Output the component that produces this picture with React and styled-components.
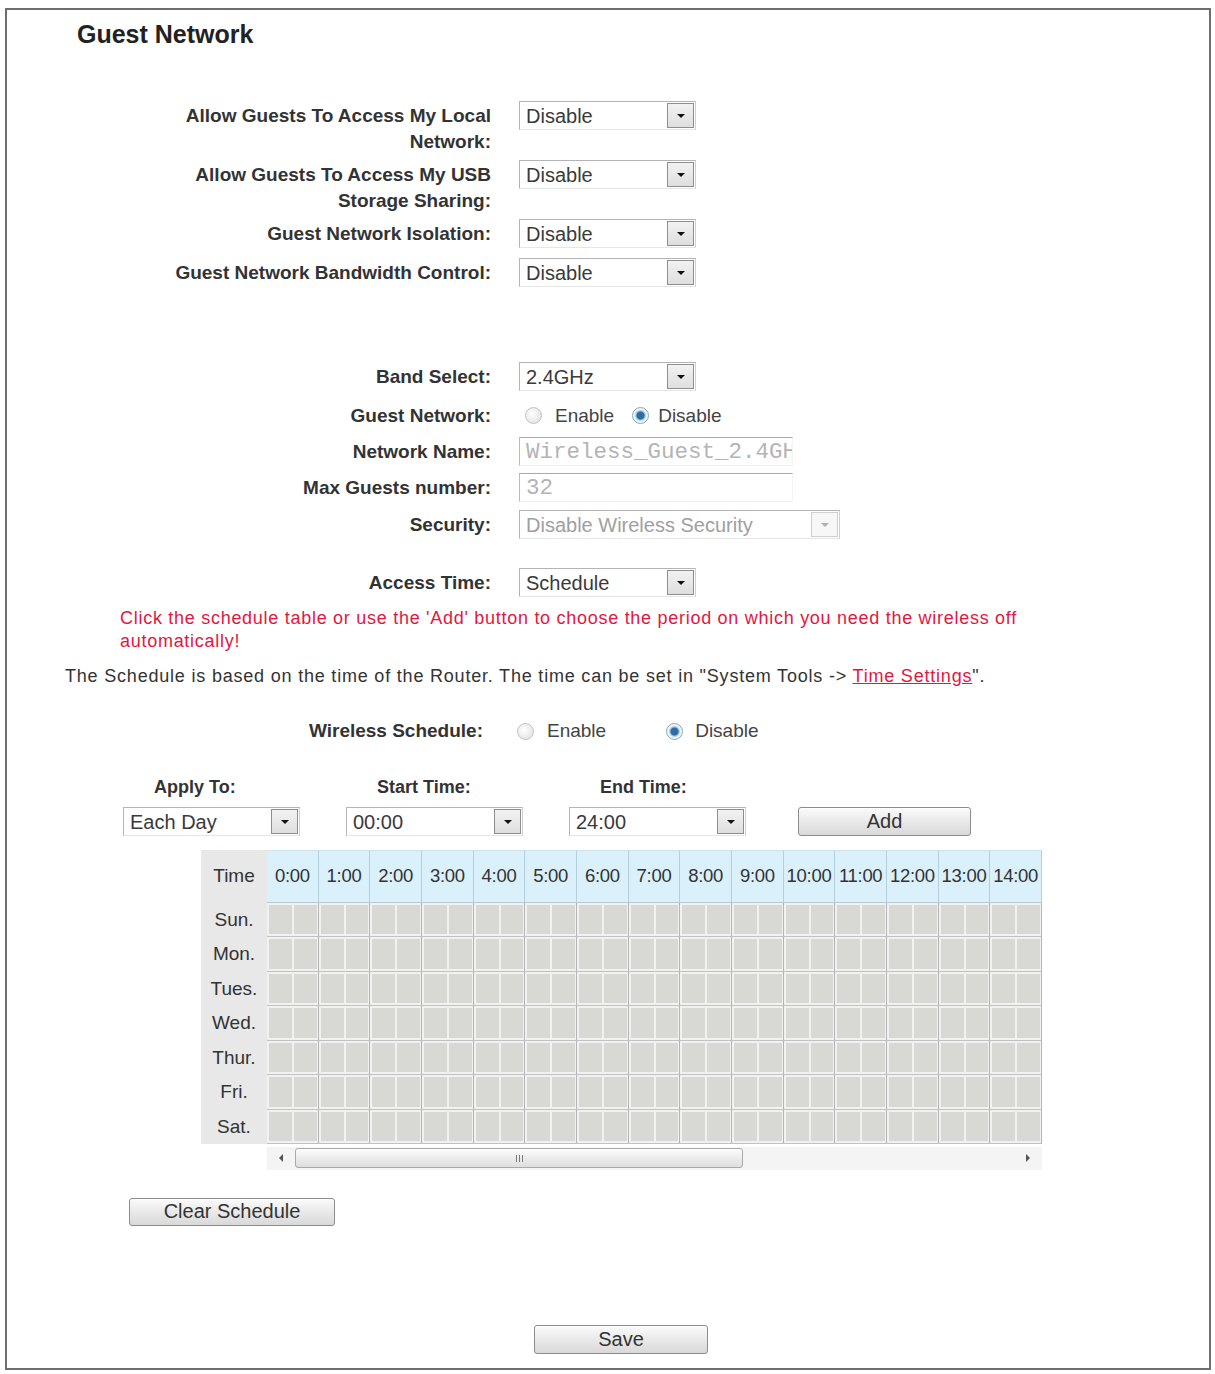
import React from "react";
import styled, { createGlobalStyle } from "styled-components";

const GlobalStyle = createGlobalStyle`
  html, body {
    margin: 0;
    padding: 0;
    background: #fff;
  }
  body {
    font-family: "Liberation Sans", Arial, sans-serif;
    color: #333;
  }
`;

const Frame = styled.div`
  box-sizing: border-box;
  width: 1206px;
  height: 1362px;
  margin: 8px 0 0 5px;
  border: 2px solid #6e6e6e;
  background: #fff;
`;

const Title = styled.h1`
  margin: 9px 0 0 70px;
  font-size: 25px;
  line-height: 30px;
  font-weight: bold;
  color: #222;
`;

const Form = styled.div`
  margin-top: 52px;
  display: flex;
  flex-direction: column;
`;

const Field = styled.div`
  display: grid;
  grid-template-columns: ${(p) => p.$labelWidth || 484}px 1fr;
  column-gap: ${(p) => p.$gap || 28}px;
  height: ${(p) => p.$h}px;
  margin-top: ${(p) => p.$mt || 0}px;
`;

const Label = styled.div`
  text-align: right;
  font-size: 19px;
  font-weight: bold;
  line-height: 26px;
  padding-top: 1.5px;
  color: #333;
`;

const Select = styled.div`
  box-sizing: border-box;
  display: flex;
  width: ${(p) => p.$w || 177}px;
  height: 29px;
  border: 1px solid #b4b4b4;
  border-bottom-color: #e6e6e6;
  border-right-color: #d0d0d0;
  background: #fff;
  font-size: 20px;
  color: ${(p) => (p.$disabled ? "#a0a0a0" : "#3a3a3a")};
`;

const SelectValue = styled.span`
  flex: 1;
  padding-left: 6px;
  line-height: 28px;
  white-space: nowrap;
  overflow: hidden;
`;

const ArrowBox = styled.span`
  box-sizing: border-box;
  width: 27px;
  margin: 1px 1px 1px 0;
  border: 1px solid ${(p) => (p.$disabled ? "#d0d0d0" : "#8e8e8e")};
  background: ${(p) =>
    p.$disabled ? "#f7f7f7" : "linear-gradient(#f2f2f2, #dedede)"};
  display: flex;
  align-items: center;
  justify-content: center;

  &::after {
    content: "";
    border-left: 4px solid transparent;
    border-right: 4px solid transparent;
    border-top: 4px solid ${(p) => (p.$disabled ? "#b0b0b0" : "#111")};
  }
`;

const TextBox = styled.input`
  box-sizing: border-box;
  width: ${(p) => p.$w || 274}px;
  height: 29px;
  margin: 0;
  padding: 0 0 0 6px;
  border: 1px solid #a8a8a8;
  border-left-color: #bcbcbc;
  border-right-color: #f4f4f4;
  border-bottom-color: #f0f0f0;
  background: #fff;
  font-family: "Liberation Mono", "Courier New", monospace;
  font-size: 22.5px;
  color: #b4b4b4;
  outline: none;
`;

const RadioGroup = styled.div`
  display: flex;
  align-items: center;
  height: 29px;
  padding-left: ${(p) => p.$pl || 0}px;
  gap: ${(p) => p.$gap}px;
`;

const Option = styled.label`
  display: flex;
  align-items: center;
  gap: ${(p) => p.$gap || 12}px;
  font-size: 19px;
  color: #444;
`;

const Radio = styled.span`
  box-sizing: border-box;
  width: 17px;
  height: 17px;
  border-radius: 50%;
  border: 1px solid ${(p) => (p.$checked ? "#8aa6bd" : "#c2c2c2")};
  background: ${(p) =>
    p.$checked
      ? "radial-gradient(circle, #2d6da3 0 3.5px, #9cc0dc 4.5px, #eef4f8 6px)"
      : "radial-gradient(circle at 40% 40%, #ffffff, #dcdcdc)"};
`;

const Note = styled.p`
  margin: 0;
  width: 925px;
  padding-left: 113px;
  font-size: 18px;
  letter-spacing: 0.72px;
  line-height: 23px;
  color: #e3163f;
`;

const Info = styled.p`
  margin: 12px 0 0 58px;
  font-size: 18px;
  letter-spacing: 0.8px;
  line-height: 23px;
  color: #333;
`;

const TimeLink = styled.a`
  color: #e3163f;
  text-decoration: underline;
`;

const Controls = styled.div`
  display: flex;
  align-items: flex-end;
  gap: 46px;
  margin-top: 29.5px;
  padding-left: 116px;
`;

const ControlGroup = styled.div`
  display: flex;
  flex-direction: column;
  gap: 8px;
`;

const SmallLabel = styled.div`
  padding-left: 31px;
  font-size: 18px;
  font-weight: bold;
  line-height: 24px;
  color: #333;
`;

const Button = styled.button`
  box-sizing: border-box;
  width: ${(p) => p.$w}px;
  height: ${(p) => p.$h || 29}px;
  margin: 0 0 0 ${(p) => p.$ml || 0}px;
  padding: 0;
  border: 1px solid #8c8c8c;
  border-radius: 3px;
  background: linear-gradient(#fbfbfb, #e9e9e9 50%, #d9d9d9);
  font-family: "Liberation Sans", Arial, sans-serif;
  font-size: 20px;
  color: #333;
  box-shadow: inset 0 1px 0 #fff;
`;

const Schedule = styled.div`
  display: flex;
  margin: 13.5px 0 0 194px;
`;

const TimeCol = styled.div`
  width: 66px;
  height: 294.5px;
  background: #e8e8e8;
  display: grid;
  grid-template-rows: 53px repeat(7, 34.5px);
  text-align: center;
  font-size: 19px;
  color: #333;
`;

const TimeCell = styled.div`
  display: flex;
  align-items: center;
  justify-content: center;
`;

const ScrollArea = styled.div`
  width: 775px;
  display: flex;
  flex-direction: column;
`;

const Hours = styled.div`
  display: grid;
  grid-template-columns: repeat(${(p) => p.$cols}, 1fr);
  grid-template-rows: 53px repeat(7, 34.5px);
  background: #c9c9c9;
`;

const HourHead = styled.div`
  box-sizing: border-box;
  display: flex;
  align-items: center;
  justify-content: center;
  background: #daf0fb;
  border-top: 1px solid #cde2ec;
  border-right: 1px solid #b3cfdd;
  border-bottom: 1px solid #b9c9d1;
  font-size: 18.5px;
  color: #333;
  white-space: nowrap;
  letter-spacing: -0.3px;
`;

const Slot = styled.div`
  box-sizing: border-box;
  display: flex;
  gap: 2px;
  padding: 2px 1px 2px 2px;
  background: #f1f1ef;
  border-right: 1px solid #b5b5b5;
  border-bottom: 1px solid #c2c2c2;
`;

const Half = styled.span`
  flex: 1;
  background: #d8d8d5;
`;

const ScrollBar = styled.div`
  display: flex;
  align-items: center;
  height: 23px;
  margin-top: 2.5px;
  background: #f4f4f4;
`;

const ScrollArrow = styled.span`
  width: 28px;
  display: flex;
  align-items: center;
  justify-content: center;

  &::after {
    content: "";
    border-top: 4px solid transparent;
    border-bottom: 4px solid transparent;
    ${(p) =>
      p.$dir === "left"
        ? "border-right: 4px solid #555;"
        : "border-left: 4px solid #555;"}
  }
`;

const Thumb = styled.span`
  box-sizing: border-box;
  width: 448px;
  height: 20px;
  border: 1px solid #a9a9a9;
  border-radius: 3px;
  background: linear-gradient(#fdfdfd, #ececec 50%, #dedede);
  display: flex;
  align-items: center;
  justify-content: center;
  gap: 2px;
`;

const Grip = styled.i`
  width: 1px;
  height: 7px;
  background: #7a7a7a;
`;

const Spacer = styled.span`
  flex: 1;
`;

const ClearRow = styled.div`
  margin: 28px 0 0 122px;
`;

const SaveRow = styled.div`
  margin: 99px 0 0 527px;
`;

const days = ["Sun.", "Mon.", "Tues.", "Wed.", "Thur.", "Fri.", "Sat."];
// hours shown in the current scroll window of the schedule grid
const hours = Array.from({ length: 15 }, (_, i) => `${i}:00`);

function Dropdown({ value, w, disabled }) {
  return (
    <Select $w={w} $disabled={disabled}>
      <SelectValue>{value}</SelectValue>
      <ArrowBox $disabled={disabled} />
    </Select>
  );
}

function Choice({ checked, children, gap }) {
  return (
    <Option $gap={gap}>
      <Radio $checked={checked} />
      {children}
    </Option>
  );
}

export default function App() {
  return (
    <>
      <GlobalStyle />
      <Frame>
        <Title>Guest Network</Title>

        <Form>
          <Field $h={59}>
            <Label>
              Allow Guests To Access My Local
              <br />
              Network:
            </Label>
            <Dropdown value="Disable" />
          </Field>
          <Field $h={59}>
            <Label>
              Allow Guests To Access My USB
              <br />
              Storage Sharing:
            </Label>
            <Dropdown value="Disable" />
          </Field>
          <Field $h={39}>
            <Label>Guest Network Isolation:</Label>
            <Dropdown value="Disable" />
          </Field>
          <Field $h={104}>
            <Label>Guest Network Bandwidth Control:</Label>
            <Dropdown value="Disable" />
          </Field>

          <Field $h={39}>
            <Label>Band Select:</Label>
            <Dropdown value="2.4GHz" />
          </Field>
          <Field $h={36}>
            <Label>Guest Network:</Label>
            <RadioGroup $pl={6} $gap={18}>
              <Choice gap={13}>Enable</Choice>
              <Choice checked gap={9}>
                Disable
              </Choice>
            </RadioGroup>
          </Field>
          <Field $h={36}>
            <Label>Network Name:</Label>
            <TextBox readOnly value="Wireless_Guest_2.4GHz" />
          </Field>
          <Field $h={37}>
            <Label>Max Guests number:</Label>
            <TextBox readOnly value="32" />
          </Field>
          <Field $h={58}>
            <Label>Security:</Label>
            <Dropdown value="Disable Wireless Security" w={321} disabled />
          </Field>
          <Field $h={38.5}>
            <Label>Access Time:</Label>
            <Dropdown value="Schedule" />
          </Field>
        </Form>

        <Note>
          Click the schedule table or use the 'Add' button to choose the period
          on which you need the wireless off automatically!
        </Note>
        <Info>
          The Schedule is based on the time of the Router. The time can be set
          in "System Tools -&gt; <TimeLink href="#">Time Settings</TimeLink>".
        </Info>

        <Field $h={29} $mt={29} $labelWidth={476} $gap={34}>
          <Label>Wireless Schedule:</Label>
          <RadioGroup $gap={60}>
            <Choice gap={13}>Enable</Choice>
            <Choice checked gap={12}>
              Disable
            </Choice>
          </RadioGroup>
        </Field>

        <Controls>
          <ControlGroup>
            <SmallLabel>Apply To:</SmallLabel>
            <Dropdown value="Each Day" />
          </ControlGroup>
          <ControlGroup>
            <SmallLabel>Start Time:</SmallLabel>
            <Dropdown value="00:00" />
          </ControlGroup>
          <ControlGroup>
            <SmallLabel>End Time:</SmallLabel>
            <Dropdown value="24:00" />
          </ControlGroup>
          <Button $w={173} $ml={6}>
            Add
          </Button>
        </Controls>

        <Schedule>
          <TimeCol>
            <TimeCell>Time</TimeCell>
            {days.map((d) => (
              <TimeCell key={d}>{d}</TimeCell>
            ))}
          </TimeCol>
          <ScrollArea>
            <Hours $cols={hours.length}>
              {hours.map((h) => (
                <HourHead key={h}>{h}</HourHead>
              ))}
              {days.map((d) =>
                hours.map((h) => (
                  <Slot key={d + h}>
                    <Half />
                    <Half />
                  </Slot>
                ))
              )}
            </Hours>
            <ScrollBar>
              <ScrollArrow $dir="left" />
              <Thumb>
                <Grip />
                <Grip />
                <Grip />
              </Thumb>
              <Spacer />
              <ScrollArrow $dir="right" />
            </ScrollBar>
          </ScrollArea>
        </Schedule>

        <ClearRow>
          <Button $w={206} $h={28}>
            Clear Schedule
          </Button>
        </ClearRow>
        <SaveRow>
          <Button $w={174}>Save</Button>
        </SaveRow>
      </Frame>
    </>
  );
}
